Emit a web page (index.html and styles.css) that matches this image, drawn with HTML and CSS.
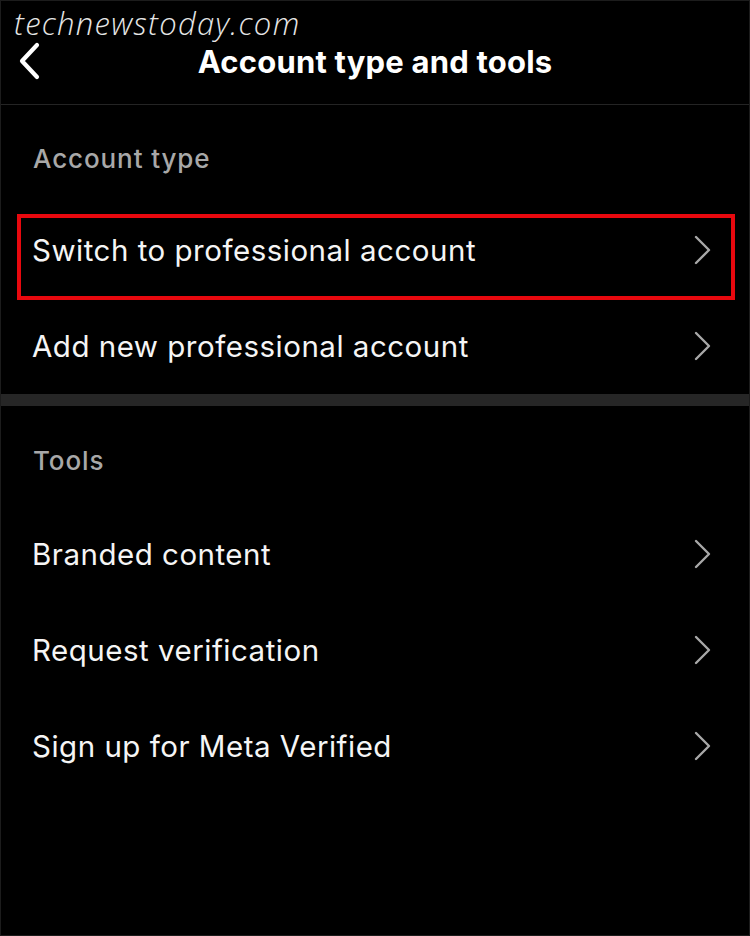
FILE: index.html
```html
<!DOCTYPE html>
<html lang="en">
<head>
    <meta charset="UTF-8">
    <meta name="viewport" content="width=device-width, initial-scale=1.0">
    <title>Account type and tools</title>
    <link rel="stylesheet" href="styles.css">
</head>
<body>

<div class="screen">
    <header class="topbar">
        <div class="watermark">technewstoday.com</div>
        <a class="back" href="#">
            <svg width="24" height="38" viewBox="0 0 24 38">
                <path d="M20 3 L5 19 L20 35" fill="none" stroke="#fff" stroke-width="4.2" stroke-linecap="round" stroke-linejoin="round"/>
            </svg>
        </a>
        <h1>Account type and tools</h1>
    </header>

    <section class="group">
        <div class="group-label first">Account type</div>
        <a class="row highlighted" href="#">
            <span>Switch to professional account</span>
            <svg class="chev" width="17" height="30" viewBox="0 0 17 30"><path d="M2 2 L15 15 L2 28" /></svg>
        </a>
        <a class="row" href="#">
            <span>Add new professional account</span>
            <svg class="chev" width="17" height="30" viewBox="0 0 17 30"><path d="M2 2 L15 15 L2 28" /></svg>
        </a>
    </section>

    <div class="divider"></div>

    <section class="group">
        <div class="group-label">Tools</div>
        <a class="row" href="#">
            <span>Branded content</span>
            <svg class="chev" width="17" height="30" viewBox="0 0 17 30"><path d="M2 2 L15 15 L2 28" /></svg>
        </a>
        <a class="row" href="#">
            <span>Request verification</span>
            <svg class="chev" width="17" height="30" viewBox="0 0 17 30"><path d="M2 2 L15 15 L2 28" /></svg>
        </a>
        <a class="row" href="#">
            <span>Sign up for Meta Verified</span>
            <svg class="chev" width="17" height="30" viewBox="0 0 17 30"><path d="M2 2 L15 15 L2 28" /></svg>
        </a>
    </section>
</div>

</body>
</html>
```

FILE: styles.css
```css
html, body {
    margin: 0;
    padding: 0;
    background-color: #000;
}
body {
    font-family: Inter, "Noto Sans", sans-serif;
    color: #f5f5f5;
}
.screen {
    width: 750px;
    height: 936px;
    box-sizing: border-box;
    border: 1px solid #1c1c1c;
    overflow: hidden;
}
.topbar {
    position: relative;
    height: 104px;
    box-sizing: border-box;
    padding-top: 18px;
    display: flex;
    align-items: center;
    justify-content: center;
    border-bottom: 1px solid #242424;
}
.watermark {
    position: absolute;
    left: 13px;
    top: 1px;
    font-family: "Open Sans", sans-serif;
    font-style: italic;
    font-weight: 300;
    font-size: 31px;
    letter-spacing: 1.3px;
    color: #e6e6e6;
}
.back {
    position: absolute;
    left: 16px;
    top: 41px;
    display: block;
    line-height: 0;
}
.topbar h1 {
    margin: 0;
    font-size: 31px;
    font-weight: 700;
    color: #fff;
    letter-spacing: 0.2px;
}
.group-label {
    height: 100px;
    box-sizing: border-box;
    padding: 40px 0 0 32px;
    font-size: 26px;
    line-height: 30px;
    color: #a8a8a8;
    font-weight: 500;
    letter-spacing: 0.9px;
}
.group-label.first {
    height: 97px;
    padding-top: 39px;
}
.row {
    position: relative;
    height: 96px;
    display: flex;
    align-items: center;
    justify-content: space-between;
    padding: 0 38px 0 31px;
    color: #f5f5f5;
    text-decoration: none;
    font-size: 29.5px;
    letter-spacing: 0.5px;
}
.row span {
    margin-top: -1px;
}
.chev path {
    fill: none;
    stroke: #a8a8a8;
    stroke-width: 2.4;
    stroke-linecap: round;
    stroke-linejoin: round;
}
.highlighted::after {
    content: "";
    position: absolute;
    left: 16px;
    right: 14px;
    top: 12px;
    bottom: -2px;
    border: 4px solid #e8080e;
}
.divider {
    height: 12px;
    background-color: #262626;
}
```
